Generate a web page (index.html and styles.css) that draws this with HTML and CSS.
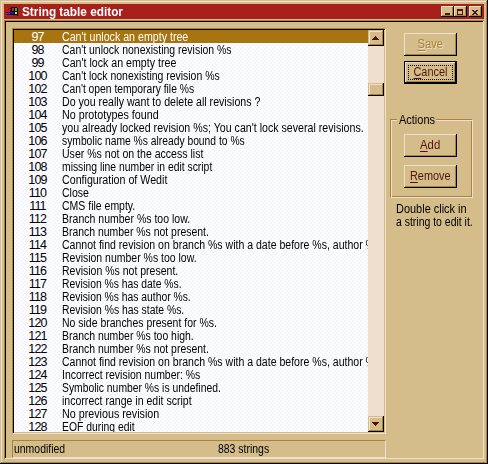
FILE: index.html
```html
<!DOCTYPE html>
<html lang="en">
<head>
<meta charset="utf-8">
<title>String table editor</title>
<link rel="stylesheet" href="styles.css">
</head>
<body>
<div class="window">
  <header class="titlebar">
    <svg class="app-icon" width="12" height="11" viewBox="0 0 12 11" shape-rendering="crispEdges">
      <path fill="#000" d="M5 1h6v8H5zM4 2h1v7H4zM11 2h1v8h-1zM2 3h1v1H2zM1 6h1v1H1z"/>
      <path fill="#f01010" d="M0 2h2v1H0zM3 3h2v1H3zM1 4h2v1H1zM6 2h2v3H6z"/>
      <path fill="#1010f0" d="M0 6h1v1H0zM2 6h3v1H2zM1 8h3v1H1zM5 6h3v2H5z"/>
      <path fill="#10d010" d="M9 2h2v3H9z"/><path fill="#f0e010" d="M9 6h2v2H9z"/>
    </svg>
    <h1 class="title"><span class="fit" data-w="101">String table editor</span></h1>
    <div class="captions">
      <button class="cap" aria-label="Minimize"><svg width="12" height="10" shape-rendering="crispEdges"><path d="M4 6h5v2H4z"/></svg></button>
      <button class="cap" aria-label="Maximize"><svg width="12" height="10" shape-rendering="crispEdges"><path fill-rule="evenodd" d="M3 2h6v6H3zM4 4v3h4V4z"/></svg></button>
      <button class="cap close" aria-label="Close"><svg width="12" height="10" shape-rendering="crispEdges"><path d="M3 3h2v1h2V3h2v1H8v1H7v1h1v1h1v1H7V7H5v1H3V7h1V6h1V5H4V4H3z"/></svg></button>
    </div>
  </header>
  <main class="client">
    <div class="left">
      <section class="listbox">
        <div class="rows">
          <div class="row selected"><b>97</b><span class="fit" data-w="126">Can't unlock an empty tree</span></div>
          <div class="row"><b>98</b><span class="fit" data-w="170">Can't unlock nonexisting revision %s</span></div>
          <div class="row"><b>99</b><span class="fit" data-w="114">Can't lock an empty tree</span></div>
          <div class="row"><b>100</b><span class="fit" data-w="158">Can't lock nonexisting revision %s</span></div>
          <div class="row"><b>102</b><span class="fit" data-w="132">Can't open temporary file %s</span></div>
          <div class="row"><b>103</b><span class="fit" data-w="198">Do you really want to delete all revisions ?</span></div>
          <div class="row"><b>104</b><span class="fit" data-w="97">No prototypes found</span></div>
          <div class="row"><b>105</b><span class="fit" data-w="302">you already locked revision %s; You can't lock several revisions.</span></div>
          <div class="row"><b>106</b><span class="fit" data-w="183">symbolic name %s already bound to %s</span></div>
          <div class="row"><b>107</b><span class="fit" data-w="141">User %s not on the access list</span></div>
          <div class="row"><b>108</b><span class="fit" data-w="150">missing line number in edit script</span></div>
          <div class="row"><b>109</b><span class="fit" data-w="105">Configuration of Wedit</span></div>
          <div class="row"><b>110</b><span class="fit" data-w="27">Close</span></div>
          <div class="row"><b>111</b><span class="fit" data-w="73">CMS file empty.</span></div>
          <div class="row"><b>112</b><span class="fit" data-w="128">Branch number %s too low.</span></div>
          <div class="row"><b>113</b><span class="fit" data-w="147">Branch number %s not present.</span></div>
          <div class="row"><b>114</b><span class="fit" data-w="318">Cannot find revision on branch %s with a date before %s, author %s</span></div>
          <div class="row"><b>115</b><span class="fit" data-w="135">Revision number %s too low.</span></div>
          <div class="row"><b>116</b><span class="fit" data-w="116">Revision %s not present.</span></div>
          <div class="row"><b>117</b><span class="fit" data-w="120">Revision %s has date %s.</span></div>
          <div class="row"><b>118</b><span class="fit" data-w="129">Revision %s has author %s.</span></div>
          <div class="row"><b>119</b><span class="fit" data-w="122">Revision %s has state %s.</span></div>
          <div class="row"><b>120</b><span class="fit" data-w="155">No side branches present for %s.</span></div>
          <div class="row"><b>121</b><span class="fit" data-w="132">Branch number %s too high.</span></div>
          <div class="row"><b>122</b><span class="fit" data-w="147">Branch number %s not present.</span></div>
          <div class="row"><b>123</b><span class="fit" data-w="318">Cannot find revision on branch %s with a date before %s, author %s</span></div>
          <div class="row"><b>124</b><span class="fit" data-w="138">Incorrect revision number: %s</span></div>
          <div class="row"><b>125</b><span class="fit" data-w="159">Symbolic number %s is undefined.</span></div>
          <div class="row"><b>126</b><span class="fit" data-w="130">incorrect range in edit script</span></div>
          <div class="row"><b>127</b><span class="fit" data-w="97">No previous revision</span></div>
          <div class="row"><b>128</b><span class="fit" data-w="73">EOF during edit</span></div>
        </div>
        <div class="scrollbar">
          <div class="sb arrow"><svg width="7" height="4" shape-rendering="crispEdges"><path d="M3 0h1v1h1v1h1v1h1v1H0V3h1V2h1V1h1z"/></svg></div>
          <div class="sb thumb"></div>
          <div class="sb arrow down"><svg width="7" height="4" shape-rendering="crispEdges"><path d="M0 0h7v1H6v1H5v1H4v1H3V3H2V2H1V1H0z"/></svg></div>
        </div>
      </section>
      <footer class="status"><span class="fit" data-w="51">unmodified</span><span class="fit" data-w="51">883 strings</span></footer>
    </div>
    <aside class="side">
      <button class="btn disabled"><span class="fit mid" data-w="26"><u>S</u>ave</span></button>
      <button class="btn default"><span class="focus"><span class="fit mid" data-w="34"><u>C</u>ancel</span></span></button>
      <section class="group">
        <h2 class="legend"><span class="fit" data-w="36">Actions</span></h2>
        <button class="btn"><span class="fit mid" data-w="20"><u>A</u>dd</span></button>
        <button class="btn"><span class="fit mid" data-w="41"><u>R</u>emove</span></button>
      </section>
      <p class="hint"><span class="fit" data-w="71">Double click in</span><span class="fit" data-w="77">a string to edit it.</span></p>
    </aside>
  </main>
</div>
<script src="script.js"></script>
</body>
</html>
```
FILE: styles.css
```css
:root {
  --face: #d4bd8a;
  --light: #f0dfcc;
  --shade: #a88438;
  --ink: #501410;
}
* { box-sizing: border-box; }
body {
  margin: 0;
  font: 12.5px/13px "Liberation Sans", Arial, sans-serif;
  color: #000;
  overflow: hidden;
}
button { font: inherit; color: var(--ink); padding: 0; border-radius: 0; }
.fit {
  display: inline-block;
  justify-self: start;
  align-self: flex-start;
  white-space: nowrap;
  transform-origin: 0 50%;
}
.mid { transform-origin: 50% 50%; align-self: center; }
.window {
  width: 488px;
  height: 464px;
  padding: 4px;
  background: var(--face);
  box-shadow: inset -1px -1px #000, inset 1px 1px var(--face), inset -2px -2px var(--shade), inset 2px 2px var(--light);
}
.titlebar {
  display: flex;
  height: 15px;
  margin-bottom: 1px;
  padding: 2px 2px 0;
  background: #a8201c;
  color: #fff;
}
.app-icon { margin: 0 4px 0 0; }
.title { margin: 0; flex: 1; font-size: 12.5px; line-height: 13px; }
.captions { display: flex; }
.cap {
  width: 13px;
  height: 11px;
  border: 0;
  background: var(--face);
  box-shadow: inset -1px -1px #000, inset 1px 1px var(--light), inset -2px -2px var(--shade);
}
.cap svg, .arrow svg { display: block; fill: var(--ink); }
.close { margin-left: 2px; }
.client {
  display: flex;
  height: 439px;
  padding: 8px;
  box-shadow: inset 1px 1px var(--shade), inset -1px -1px var(--light), inset 2px 2px #000;
}
.left { width: 374px; }
.listbox {
  display: flex;
  height: 406px;
  border: 1px solid;
  border-color: var(--shade) var(--light) var(--light) var(--shade);
  box-shadow: inset 1px 1px #000;
  padding: 1px;
}
.rows {
  width: 354px;
  overflow: hidden;
  background: repeating-conic-gradient(#fff 0 25%, #f4f5ff 0 50%) 0 0 / 4px 4px;
}
.row { display: grid; grid-template-columns: 47px auto; height: 13px; padding-left: 1px; line-height: 14px; }
.row b { font-weight: 400; text-align: center; letter-spacing: -0.85px; padding-right: 2px; }
.selected { background: #a87410; color: #fff; }
.scrollbar { display: flex; flex-direction: column; width: 16px; background: #eedfcf; }
.sb {
  width: 16px;
  background: var(--face);
  box-shadow: inset -1px -1px #000, inset 0 1px var(--face), inset 1px 0 var(--face), inset -2px -2px var(--shade), inset 2px 2px var(--light);
}
.arrow { display: flex; align-items: center; justify-content: center; height: 16px; padding-bottom: 1px; padding-right: 1px; }
.thumb { height: 13px; margin-top: 37px; }
.down { margin-top: auto; }
.status {
  display: grid;
  grid-template-columns: 204px auto;
  height: 18px;
  margin-top: 6px;
  padding: 1px;
  line-height: 14px;
  border: 1px solid;
  border-color: var(--shade) var(--light) var(--light) var(--shade);
}
.side { width: 82px; margin-left: 4px; padding-top: 5px; }
.btn {
  display: flex;
  align-items: center;
  justify-content: center;
  width: 53px;
  height: 23px;
  margin: 0 0 5px 14px;
  border: 0;
  background: var(--face);
  box-shadow: inset -1px -1px #000, inset 1px 1px var(--light), inset -2px -2px var(--shade);
}
.btn u { text-underline-offset: 2px; text-decoration-thickness: 1px; }
.disabled { color: var(--shade); text-shadow: 1px 1px var(--light); }
.default { border: 1px solid #000; }
.focus {
  display: flex;
  justify-content: center;
  width: 45px;
  height: 15px;
  border: 1px dotted #000;
}
.group {
  width: 83px;
  height: 79px;
  margin-top: 35px;
  border: 1px solid var(--shade);
  border-right-color: var(--light);
  border-bottom-color: var(--light);
  box-shadow: inset 1px 1px var(--light), inset -1px -1px var(--shade);
}
.legend {
  width: 39px;
  height: 13px;
  margin: -6px 0 7px 6px;
  padding-left: 2px;
  background: var(--face);
  font-size: 12.5px;
  font-weight: 400;
}
.group .btn { margin: 0 0 8px 13px; }
.hint { display: flex; flex-direction: column; margin: 5px 0 0 6px; }
```
FILE: script.js
```js
// Condense each label to its dialog-font width.
document.querySelectorAll('.fit').forEach(function (el) {
  var scale = el.dataset.w / el.offsetWidth;
  el.style.transform = 'scaleX(' + scale.toFixed(4) + ')';
});
```
